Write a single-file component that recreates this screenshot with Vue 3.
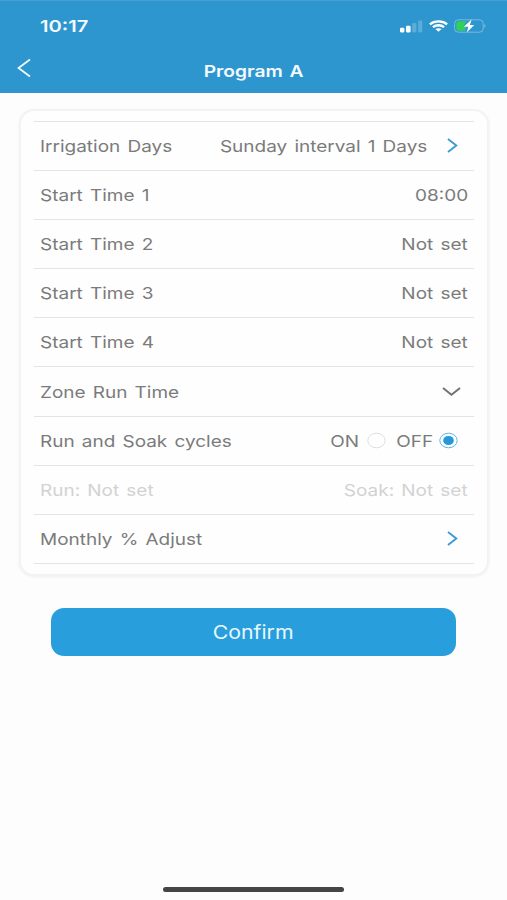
<script setup>
const rows = [
  { label: 'Irrigation Days', value: 'Sunday interval 1 Days', icon: 'right' },
  { label: 'Start Time 1', value: '08:00' },
  { label: 'Start Time 2', value: 'Not set' },
  { label: 'Start Time 3', value: 'Not set' },
  { label: 'Start Time 4', value: 'Not set' },
  { label: 'Zone Run Time', icon: 'down' },
  { label: 'Run and Soak cycles', radio: true },
  { label: 'Run: Not set', value: 'Soak: Not set', muted: true },
  { label: 'Monthly % Adjust', icon: 'right' },
]
</script>

<template>
  <div class="screen">
    <header class="header">
      <div class="status">
        <span class="clock wide">10:17</span>
        <div class="indicators">
          <svg class="signal" width="23" height="13" viewBox="0 0 23 13">
            <rect x="0" y="7.8" width="4.4" height="4.6" rx="1.1" fill="#fff" />
            <rect x="6" y="5.8" width="4.6" height="6.6" rx="1.1" fill="#fff" />
            <rect x="12.2" y="3.1" width="4.2" height="9.3" rx="1.1" fill="#fff" opacity=".22" />
            <rect x="18.2" y="0.6" width="4" height="11.8" rx="1.1" fill="#fff" opacity=".22" />
          </svg>
          <svg class="wifi" width="19" height="12" viewBox="0 0 19 12">
            <g fill="none" stroke="#fff" stroke-width="2.3">
              <path d="M.9 4.3C5.4.4 13.6.4 18.1 4.3" />
              <path d="M3.9 7.1C6.9 4.6 12.1 4.6 15.1 7.1" />
            </g>
            <path d="M6.4 9.1C8 7.8 11 7.8 12.6 9.1L9.5 11.8Z" fill="#fff" />
          </svg>
          <svg class="battery" width="33" height="14" viewBox="0 0 33 14">
            <rect x=".6" y=".8" width="28.6" height="12.4" rx="3.6" fill="none" stroke="#7ab9df" stroke-width="1" />
            <path d="M5 2.3H12.4L9.2 7.7H12L11 11.7H5Q2.3 11.7 2.3 9V5Q2.3 2.3 5 2.3Z" fill="#30d158" />
            <path d="M30.5 5Q32.5 7 30.5 9Z" fill="#8cc5e6" />
            <path d="M17.6 .6L9.8 7.8H14.3L12.9 13.3L20.3 5.9H15.9Z" fill="#fff" />
          </svg>
        </div>
      </div>
      <div class="nav">
        <svg class="back" width="14" height="20" viewBox="0 0 14 20">
          <path d="M13 1.5L1.5 10L13 18.5" fill="none" stroke="#f3faff" stroke-width="1.7" />
        </svg>
        <h1 class="title"><span class="wide center">Program A</span></h1>
      </div>
    </header>

    <main class="card">
      <div v-for="row in rows" :key="row.label" class="row" :class="{ muted: row.muted }">
        <span class="wide">{{ row.label }}</span>
        <div class="end">
          <span v-if="row.value" class="wide right">{{ row.value }}</span>
          <template v-if="row.radio">
            <span class="wide right">ON</span>
            <svg class="radio first" width="19" height="17" viewBox="0 0 19 17">
              <ellipse cx="9.5" cy="8.5" rx="8.7" ry="7.3" fill="#fff" stroke="#dedede" />
            </svg>
            <span class="wide right">OFF</span>
            <svg class="radio last" width="19" height="17" viewBox="0 0 19 17">
              <ellipse cx="9.5" cy="8.5" rx="8.7" ry="7.3" fill="#fff" stroke="#5fb5e5" />
              <ellipse cx="9.5" cy="8.5" rx="5.3" ry="4.5" fill="#2499d9" />
            </svg>
          </template>
          <svg v-if="row.icon === 'right'" class="chevron" width="11" height="16" viewBox="0 0 11 16">
            <path d="M1 1L9.3 7.5L1 14" fill="none" stroke="#379bd5" stroke-width="1.9" />
          </svg>
          <svg v-if="row.icon === 'down'" class="expand" width="19" height="10" viewBox="0 0 19 10">
            <path d="M1 1L9.5 7.7L18 1" fill="none" stroke="#707070" stroke-width="1.9" />
          </svg>
        </div>
      </div>
    </main>

    <button class="confirm"><span class="wide center">Confirm</span></button>
    <div class="home"></div>
  </div>
</template>

<style>
body {
  margin: 0;
  background: #fdfdfd;
}
</style>

<style scoped>
.screen {
  display: flex;
  flex-direction: column;
  width: 507px;
  height: 900px;
  overflow: hidden;
  background: #fdfdfd;
  font-family: Inter, "Liberation Sans", sans-serif;
  font-size: 16.5px;
  color: #7b7b7b;
}
.wide {
  display: inline-block;
  white-space: nowrap;
  word-spacing: 1.6px;
  transform: scaleX(1.15);
  transform-origin: left center;
}
.wide.right {
  transform-origin: right center;
}
.wide.center {
  transform-origin: center;
}
.header {
  box-sizing: border-box;
  height: 93px;
  flex: none;
  background: #2e96ce;
  border-top: 1px solid #479fd2;
  border-bottom: 1px solid #3a93c4;
  color: #f3faff;
}
.status {
  display: flex;
  justify-content: space-between;
  height: 50px;
  padding: 0 21px 0 40px;
  align-items: center;
}
.clock {
  font-size: 16.5px;
  font-weight: 600;
}
.clock.wide {
  transform: scaleX(1.22);
}
.indicators {
  display: flex;
  align-items: center;
}
.wifi {
  margin-left: 6px;
}
.battery {
  margin-left: 6px;
  margin-right: -1px;
}
.nav {
  display: grid;
  grid-template-columns: 14px 1fr 14px;
  align-items: center;
  height: 38px;
  padding: 0 17px;
}
.back {
  margin-bottom: 4px;
}
.title {
  margin: 1px 0 0;
  font-size: 16px;
  font-weight: 600;
  text-align: center;
}
.title .wide {
  transform: scaleX(1.2);
}
.card {
  box-sizing: border-box;
  flex: none;
  width: 470px;
  height: 467px;
  margin: 16px 0 0 19px;
  padding: 10px 13px 0;
  border: 2px solid #f3f3f3;
  border-radius: 15px;
  background: #fefefe;
  box-shadow: 0 1px 3px rgba(0, 0, 0, 0.06);
}
.row {
  box-sizing: border-box;
  display: flex;
  align-items: center;
  justify-content: space-between;
  height: 49.1px;
  padding: 0 6px;
  border-top: 1px solid #e4e4e4;
}
.row:last-child {
  height: 50px;
  border-bottom: 1px solid #e4e4e4;
}
.end {
  display: flex;
  align-items: center;
}
.muted {
  color: #d2d2d2;
}
.chevron {
  margin: 0 10px 0 20px;
}
.expand {
  margin-right: 7px;
}
.radio.first {
  margin: 0 15px 0 8px;
}
.radio.last {
  margin: 0 10px 0 6px;
}
.confirm {
  flex: none;
  width: 405px;
  height: 48px;
  margin: 32px 0 0 51px;
  padding: 0;
  border: 0;
  border-radius: 13px;
  background: #289fdc;
  color: #e9f8ff;
  font-family: inherit;
  font-size: 18.5px;
}
.home {
  width: 181px;
  height: 5px;
  margin: auto 0 8px 163px;
  border-radius: 3px;
  background: #454545;
}
</style>
